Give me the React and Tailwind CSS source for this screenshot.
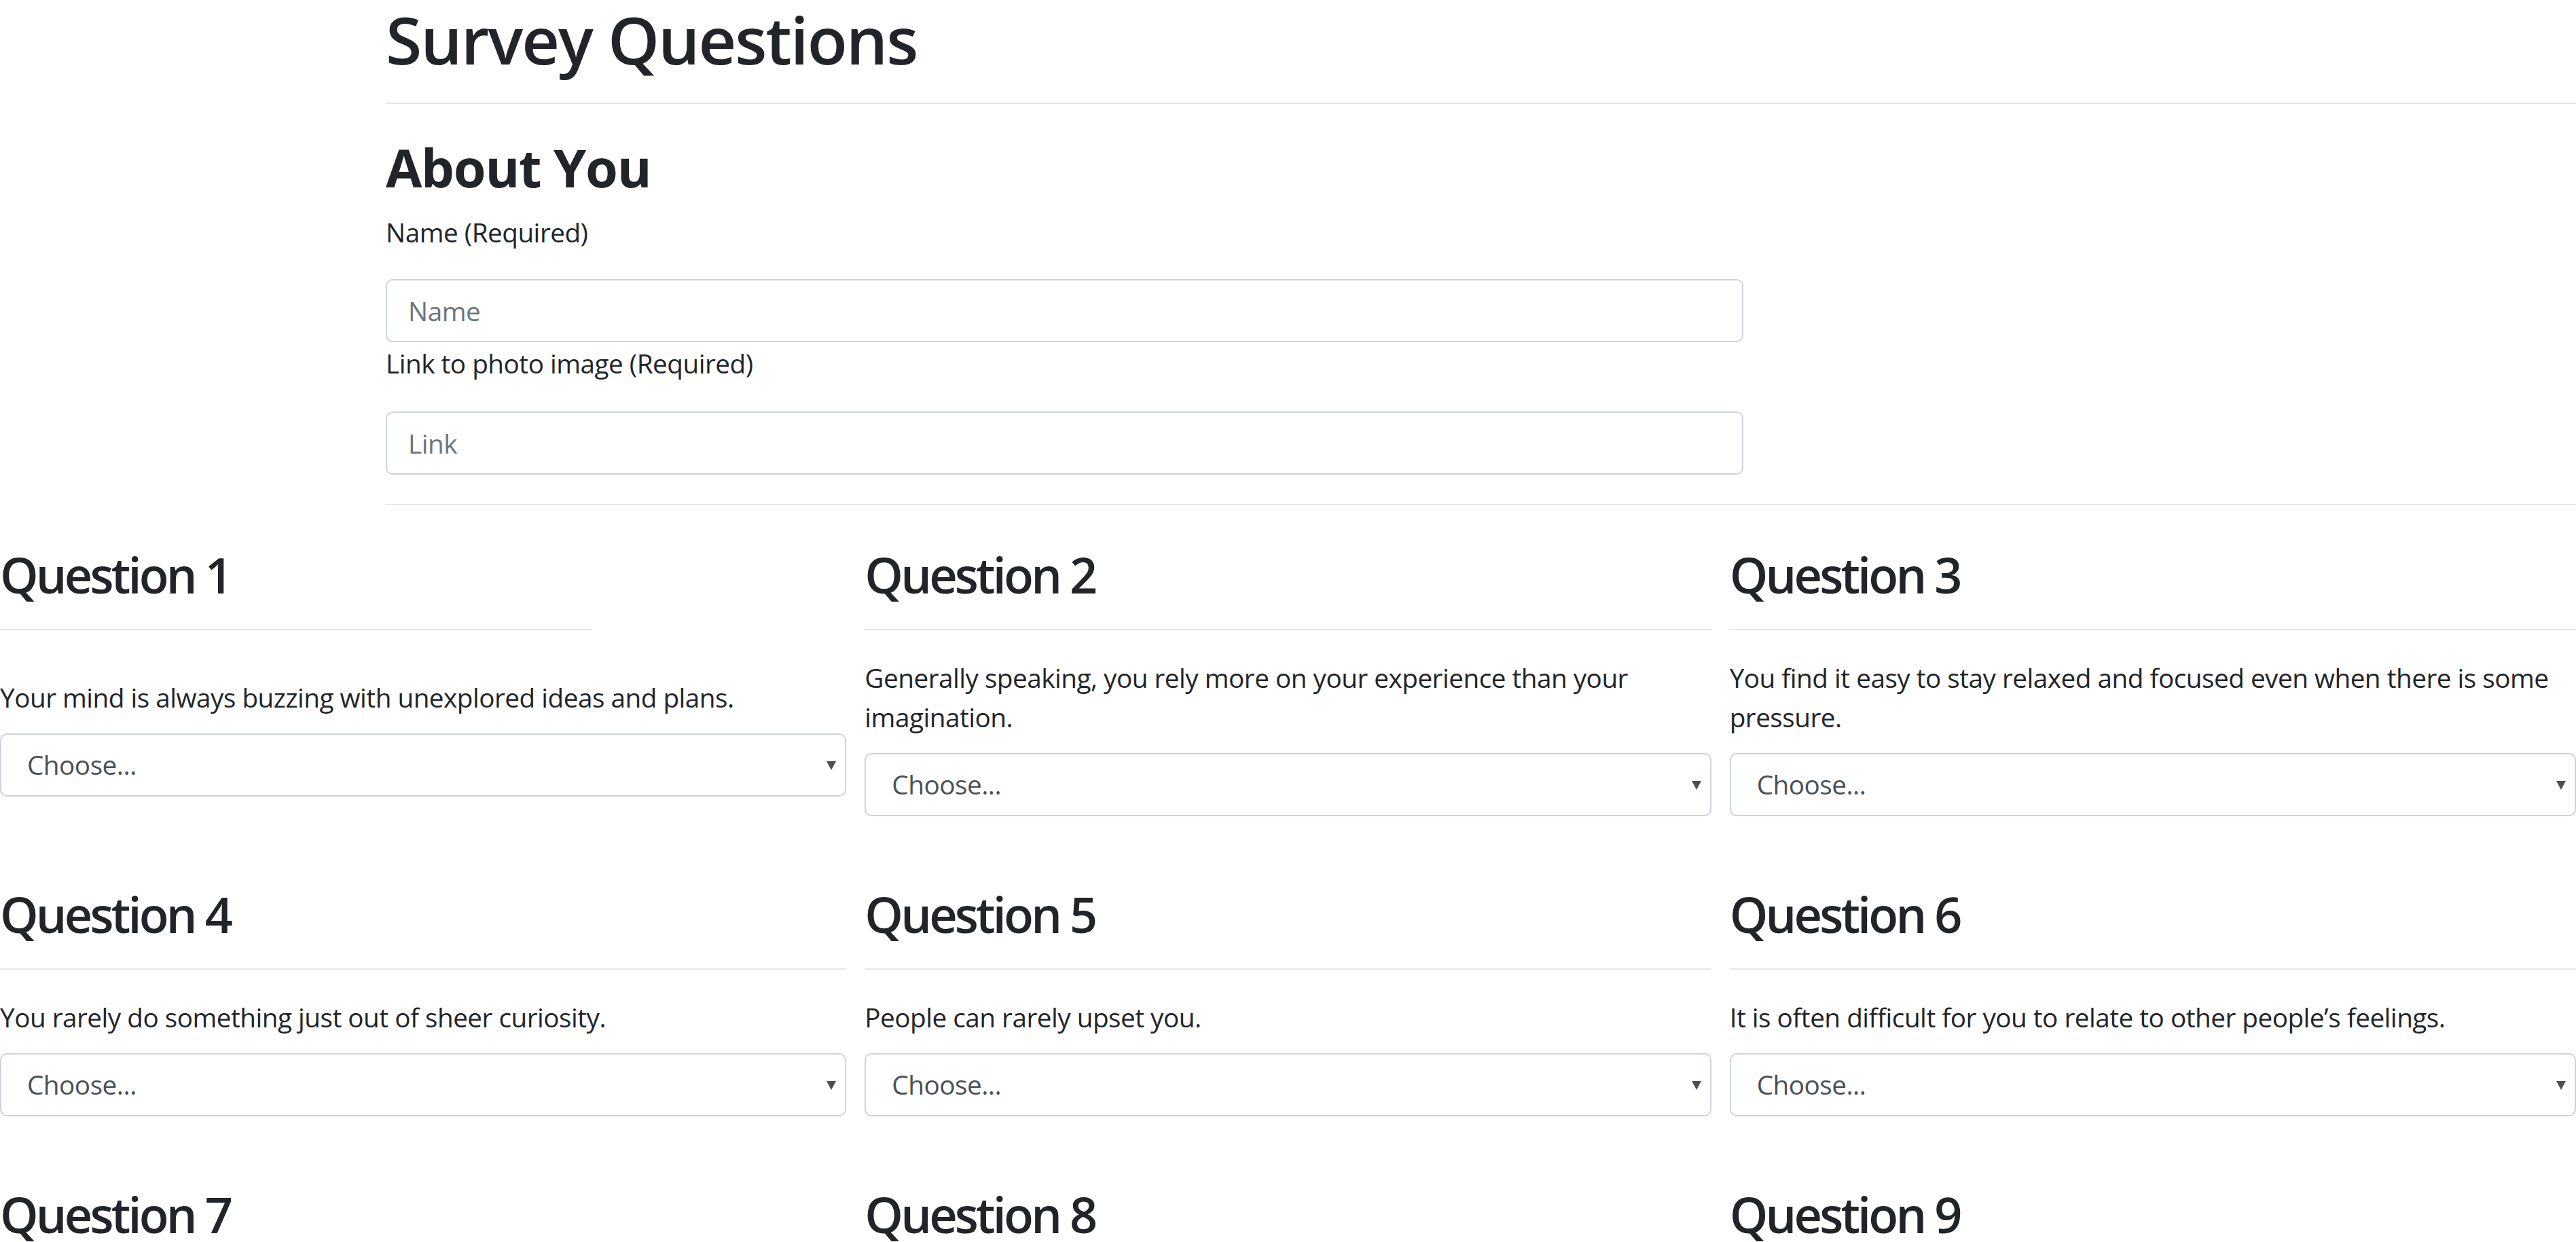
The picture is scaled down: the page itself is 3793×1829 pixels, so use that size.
import React from 'react'

const questions = [
  "Your mind is always buzzing with unexplored ideas and plans.",
  "Generally speaking, you rely more on your experience than your imagination.",
  "You find it easy to stay relaxed and focused even when there is some pressure.",
  "You rarely do something just out of sheer curiosity.",
  "People can rarely upset you.",
  "It is often difficult for you to relate to other people’s feelings.",
  "You often make a backup plan for a backup plan.",
  "You usually prefer to be around others rather than on your own.",
  "You become overwhelmed by emotions easily.",
  "You are more inclined to follow your head than your heart."
]

const Arrow = () => (
  <svg viewBox="0 0 14 14" className="pointer-events-none absolute right-[15px] top-1/2 h-[14px] w-[14px] -translate-y-1/2">
    <polygon points="0,1 14,1 7,14" fill="#4b5056" />
  </svg>
)

const Question = ({ n, text, hrClass }) => (
  <div className="flex flex-col">
    <h3 className="text-[72px] leading-[93px] font-semibold tracking-[-3.8px]">Question {n}</h3>
    <div className={`mt-[33px] h-[2px] bg-[#e6e6e6] ${hrClass}`} />
    <div className="flex flex-1 flex-col justify-center pt-[41px]">
      <label className="text-[38.7px] leading-[58px] tracking-[-0.5px]">{text}</label>
      <div className="relative mt-[24px]">
        <select
          defaultValue=""
          className="h-[93px] w-full appearance-none rounded-[10px] border-2 border-[#ced4da] bg-white pl-[38px] text-[38.7px] tracking-[-0.5px] text-[#495057] outline-none"
        >
          <option value="">Choose...</option>
          <option value="1">1 (Strongly Disagree)</option>
          <option value="2">2</option>
          <option value="3">3</option>
          <option value="4">4</option>
          <option value="5">5 (Strongly Agree)</option>
        </select>
        <Arrow />
      </div>
    </div>
  </div>
)

export default function App() {
  return (
    <div className="min-h-screen w-full overflow-hidden bg-white text-[#212529] font-['Open_Sans',sans-serif]">
      <div className="ml-[568px]">
        <h1 className="text-[96.8px] leading-[116px] font-semibold tracking-[-2px]">Survey Questions</h1>
        <div className="mt-[35px] h-[2px] w-full bg-[#e6e6e6]" />
        <h2 className="mt-[47px] text-[77.4px] leading-[93px] font-bold tracking-[-1.3px]">About You</h2>
        <label className="mt-[20px] block text-[38.7px] leading-[58px] tracking-[-0.5px]">Name (Required)</label>
        <input
          placeholder="Name"
          className="mt-[40px] block h-[93px] w-[1999px] rounded-[10px] border-2 border-[#ced4da] pl-[31px] text-[38.7px] tracking-[-0.5px] text-[#495057] outline-none placeholder:text-[#6c757d]"
        />
        <label className="mt-[2px] block text-[38.7px] leading-[58px] tracking-[-0.5px]">Link to photo image (Required)</label>
        <input
          placeholder="Link"
          className="mt-[42px] block h-[93px] w-[1999px] rounded-[10px] border-2 border-[#ced4da] pl-[31px] text-[38.7px] tracking-[-0.5px] text-[#495057] outline-none placeholder:text-[#6c757d]"
        />
        <div className="mt-[43px] h-[2px] w-full bg-[#e6e6e6]" />
      </div>

      <div className="mt-[56px] grid grid-cols-3 gap-x-[27px] gap-y-[98px]">
        {questions.map((q, i) => (
          <Question key={i} n={i + 1} text={q} hrClass={i === 0 ? 'w-[872px]' : 'w-full'} />
        ))}
      </div>

      <div className="mt-[98px] mb-[120px]">
        <button className="rounded-[10px] bg-[#007bff] px-[30px] py-[15px] text-[38.7px] text-white">Submit</button>
      </div>
    </div>
  )
}
